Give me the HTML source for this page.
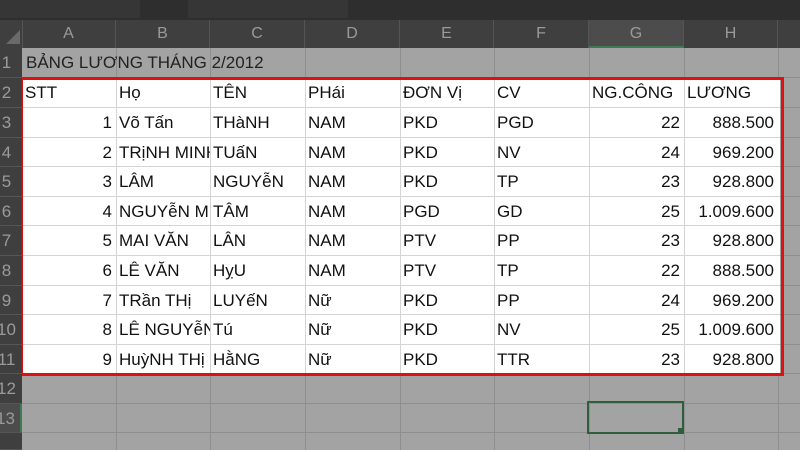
<!DOCTYPE html><html><head><meta charset="utf-8"><style>
body{margin:0;width:800px;height:450px;overflow:hidden;background:#a3a3a3;font-family:"Liberation Sans","DejaVu Sans",sans-serif;position:relative}
.a{position:absolute}
.top{left:0;top:0;width:800px;height:20px;background:#2e2e2e}
.hdr{left:0;top:20px;width:800px;height:28px;background:#3f3f3f}
.ch{position:absolute;top:20px;height:28px;line-height:28px;text-align:center;color:#9a9a9a;font-size:16px;border-right:1px solid #555;box-sizing:border-box}
.rh{position:absolute;left:-9px;width:31px;background:#3f3f3f;color:#9a9a9a;font-size:17px;text-align:center;box-sizing:border-box;border-bottom:1px solid #555;overflow:hidden}
.vl{position:absolute;top:48px;height:402px;width:1px;background:#8e8e8e}
.hl{position:absolute;left:22px;width:778px;height:1px;background:#8e8e8e}
.t{position:absolute;font-size:17px;color:#111;white-space:nowrap;overflow:hidden}
</style></head><body>
<div class="a top"></div>
<div class="a" style="left:0;top:0;width:140px;height:18px;background:#363636"></div>
<div class="a" style="left:188px;top:0;width:160px;height:18px;background:#363636"></div>
<div class="a hdr"></div>
<div class="a" style="left:0;top:20px;width:22px;height:28px;background:#3f3f3f;border-right:1px solid #555"></div>
<svg class="a" style="left:6px;top:30px" width="14" height="14"><polygon points="14,0 14,14 0,14" fill="#6a6a6a"/></svg>
<div class="ch" style="left:22px;width:94px">A</div>
<div class="ch" style="left:116px;width:94px">B</div>
<div class="ch" style="left:210px;width:95px">C</div>
<div class="ch" style="left:305px;width:95px">D</div>
<div class="ch" style="left:400px;width:94px">E</div>
<div class="ch" style="left:494px;width:95px">F</div>
<div class="ch" style="left:589px;width:95px;background:#4c4c4c;border-bottom:2px solid #3f7a55">G</div>
<div class="ch" style="left:684px;width:94px">H</div>
<div class="vl" style="left:116px"></div><div class="vl" style="left:210px"></div><div class="vl" style="left:305px"></div><div class="vl" style="left:400px"></div><div class="vl" style="left:494px"></div><div class="vl" style="left:589px"></div><div class="vl" style="left:684px"></div><div class="vl" style="left:778px"></div>
<div class="hl" style="top:77px"></div><div class="hl" style="top:107px"></div><div class="hl" style="top:137px"></div><div class="hl" style="top:166px"></div><div class="hl" style="top:196px"></div><div class="hl" style="top:225px"></div><div class="hl" style="top:255px"></div><div class="hl" style="top:285px"></div><div class="hl" style="top:314px"></div><div class="hl" style="top:344px"></div><div class="hl" style="top:373px"></div><div class="hl" style="top:403px"></div><div class="hl" style="top:432px"></div>
<div class="a" style="left:22px;top:78px;width:758px;height:295px;background:#fff"></div>
<svg class="a" style="left:22px;top:78px" width="758" height="295">
<g stroke="#d4d4d4" stroke-width="1">
<line x1="94.5" y1="0" x2="94.5" y2="295"/><line x1="188.5" y1="0" x2="188.5" y2="295"/><line x1="283.5" y1="0" x2="283.5" y2="295"/><line x1="378.5" y1="0" x2="378.5" y2="295"/><line x1="472.5" y1="0" x2="472.5" y2="295"/><line x1="567.5" y1="0" x2="567.5" y2="295"/><line x1="662.5" y1="0" x2="662.5" y2="295"/>
<line x1="0" y1="29.5" x2="758" y2="29.5"/><line x1="0" y1="59.5" x2="758" y2="59.5"/><line x1="0" y1="88.5" x2="758" y2="88.5"/><line x1="0" y1="118.5" x2="758" y2="118.5"/><line x1="0" y1="147.5" x2="758" y2="147.5"/><line x1="0" y1="177.5" x2="758" y2="177.5"/><line x1="0" y1="207.5" x2="758" y2="207.5"/><line x1="0" y1="236.5" x2="758" y2="236.5"/><line x1="0" y1="266.5" x2="758" y2="266.5"/>
</g></svg>
<div class="a" style="left:20px;top:77px;width:758px;height:293px;border:3px solid #e01010"></div>
<div class="rh" style="top:48px;height:30px;line-height:30px">1</div>
<div class="rh" style="top:78px;height:30px;line-height:30px">2</div>
<div class="rh" style="top:108px;height:30px;line-height:30px">3</div>
<div class="rh" style="top:138px;height:29px;line-height:29px">4</div>
<div class="rh" style="top:167px;height:30px;line-height:30px">5</div>
<div class="rh" style="top:197px;height:29px;line-height:29px">6</div>
<div class="rh" style="top:226px;height:30px;line-height:30px">7</div>
<div class="rh" style="top:256px;height:30px;line-height:30px">8</div>
<div class="rh" style="top:286px;height:29px;line-height:29px">9</div>
<div class="rh" style="top:315px;height:30px;line-height:30px">10</div>
<div class="rh" style="top:345px;height:29px;line-height:29px">11</div>
<div class="rh" style="top:374px;height:30px;line-height:30px">12</div>
<div class="rh" style="top:404px;height:29px;line-height:29px;background:#4c4c4c;border-right:2px solid #3f7a55">13</div>
<div class="rh" style="top:433px;height:17px;line-height:29px"></div>
<div class="a" style="left:587px;top:401px;width:93px;height:29px;border:2px solid #2f5e3c"></div>
<div class="a" style="left:678px;top:428px;width:6px;height:6px;background:#2f5e3c"></div>
<div class="t" style="left:26px;top:53px;color:#222">BẢNG LƯƠNG THÁNG 2/2012</div>
<div id="tx"></div>
<script>
var rows=[["STT","Họ","TÊN","PHái","ĐƠN Vị","CV","NG.CÔNG","LƯƠNG"],
["1","Võ Tấn","THàNH","NAM","PKD","PGD","22","888.500"],
["2","TRịNH MINH","TUấN","NAM","PKD","NV","24","969.200"],
["3","LÂM","NGUYễN","NAM","PKD","TP","23","928.800"],
["4","NGUYễN MINH","TÂM","NAM","PGD","GD","25","1.009.600"],
["5","MAI VĂN","LÂN","NAM","PTV","PP","23","928.800"],
["6","LÊ VĂN","HỵU","NAM","PTV","TP","22","888.500"],
["7","TRần THị","LUYếN","Nữ","PKD","PP","24","969.200"],
["8","LÊ NGUYễN","Tú","Nữ","PKD","NV","25","1.009.600"],
["9","HuỳNH THị","HằNG","Nữ","PKD","TTR","23","928.800"]];
var xs=[22,116,210,305,400,494,589,684,778],tops=[78,108,138,167,197,226,256,286,315,345],h="";
rows.forEach(function(r,i){r.forEach(function(c,j){var right=i>0&&(j==0||j==6||j==7);
var w=xs[j+1]-xs[j]-(right?4:3);
h+='<div class="t" style="left:'+(xs[j]+(right?0:3))+'px;top:'+(tops[i]+5)+'px;width:'+w+'px;'+(right?'text-align:right;':'')+'">'+c+'</div>';});});
document.getElementById('tx').innerHTML=h;
</script>
</body></html>
